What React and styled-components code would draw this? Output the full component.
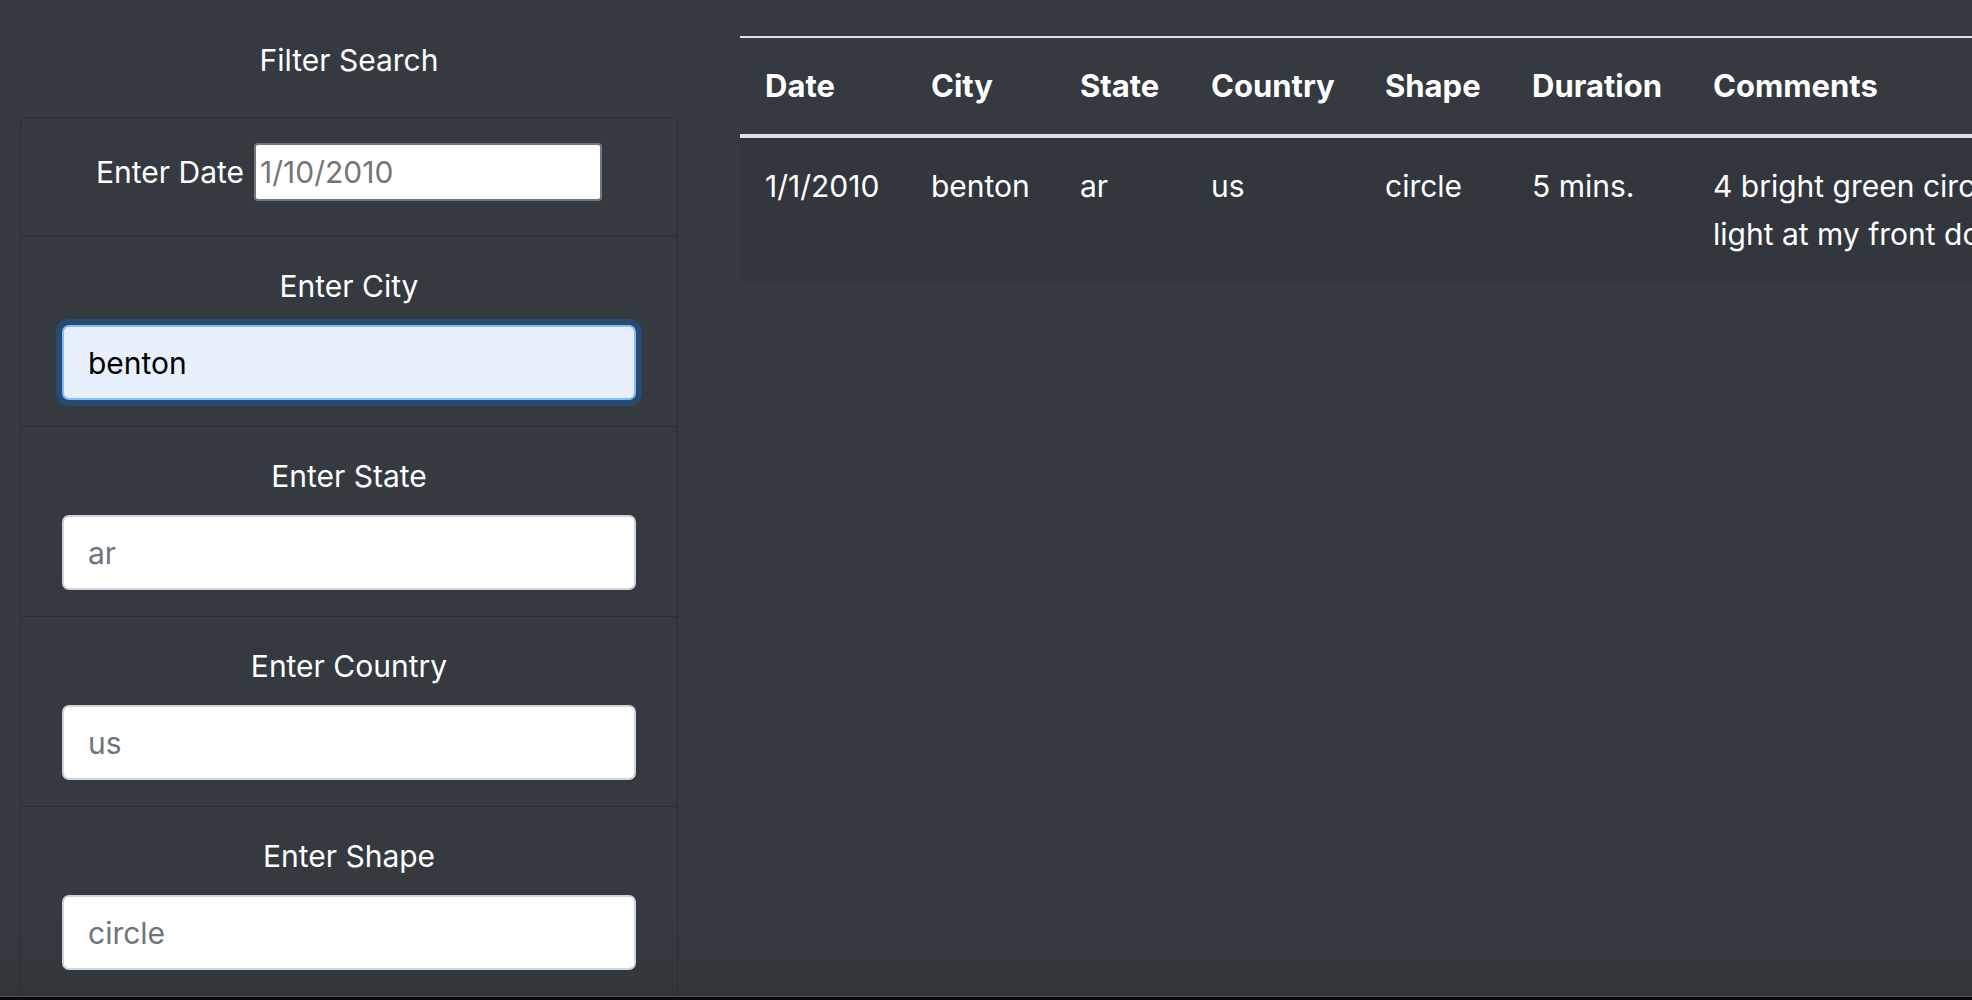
import React from "react";
import styled, { createGlobalStyle } from "styled-components";

const GlobalStyle = createGlobalStyle`
  html, body {
    margin: 0;
    padding: 0;
    background: #343a40;
    overflow: hidden;
  }
  body {
    font-family: Inter, "Noto Sans", sans-serif;
    color: #fff;
  }
  * {
    box-sizing: border-box;
  }
`;

// one row of the ufo sightings data
const sightings = [
  {
    datetime: "1/1/2010",
    city: "benton",
    state: "ar",
    country: "us",
    shape: "circle",
    durationMinutes: "5 mins.",
    comments:
      "4 bright green circles high in the sky going in circles then one bright green light at my front door.",
  },
];

const columns = [
  { key: "datetime", title: "Date", width: 166 },
  { key: "city", title: "City", width: 149 },
  { key: "state", title: "State", width: 131 },
  { key: "country", title: "Country", width: 174 },
  { key: "shape", title: "Shape", width: 147 },
  { key: "durationMinutes", title: "Duration", width: 181 },
  { key: "comments", title: "Comments", width: 1150 },
];

const filters = [
  { id: "city", label: "Enter City", value: "benton", focused: true },
  { id: "state", label: "Enter State", placeholder: "ar" },
  { id: "country", label: "Enter Country", placeholder: "us" },
  { id: "shape", label: "Enter Shape", placeholder: "circle" },
];

const App = () => {
  return (
    <Page>
      <GlobalStyle />
      <Main>
        <Sidebar>
          <Heading>Filter Search</Heading>
          <FilterList>
            <DateItem>
              <DateLabel htmlFor="datetime">Enter Date</DateLabel>
              <DateInput id="datetime" type="text" placeholder="1/10/2010" />
            </DateItem>
            {filters.map((f) => (
              <FilterItem key={f.id}>
                <FilterLabel htmlFor={f.id}>{f.label}</FilterLabel>
                <FilterInput
                  id={f.id}
                  type="text"
                  $focused={f.focused}
                  defaultValue={f.value}
                  placeholder={f.placeholder}
                />
              </FilterItem>
            ))}
          </FilterList>
        </Sidebar>

        <TableWrap>
          <Table $width={columns.reduce((sum, c) => sum + c.width, 0)}>
            <thead>
              <tr>
                {columns.map((c) => (
                  <Th key={c.key} $width={c.width}>
                    {c.title}
                  </Th>
                ))}
              </tr>
            </thead>
            <tbody>
              {sightings.map((s, i) => (
                <tr key={i}>
                  {columns.map((c) => (
                    <Td key={c.key}>{s[c.key]}</Td>
                  ))}
                </tr>
              ))}
            </tbody>
          </Table>
        </TableWrap>
      </Main>
      <WindowEdge />
    </Page>
  );
};

const Page = styled.div`
  display: flex;
  flex-direction: column;
  width: 1972px;
  height: 1000px;
  overflow: hidden;
`;

const Main = styled.div`
  flex: 1;
  display: flex;
  flex-direction: row;
  align-items: flex-start;
  gap: 62px;
  padding-left: 20px;
  overflow: hidden;
  background: linear-gradient(to bottom, #343a40 0%, #343a40 92%, #31363a 100%);
`;

const Sidebar = styled.div`
  flex: none;
  width: 658px;
`;

const Heading = styled.h5`
  margin: 38px 0 34px;
  font-size: 30px;
  line-height: 45px;
  font-weight: 400;
  text-align: center;
`;

const FilterList = styled.ul`
  margin: 0;
  padding: 0;
  list-style: none;
  border: 1px solid #2c3035;
  border-radius: 7px;
  overflow: hidden;
`;

const DateItem = styled.li`
  display: flex;
  align-items: center;
  justify-content: center;
  gap: 10px;
  padding: 25px 0 35px;
`;

const DateLabel = styled.label`
  font-size: 30px;
  line-height: 45px;
`;

const DateInput = styled.input`
  width: 348px;
  height: 58px;
  padding: 0 4px;
  border: 2px solid #767676;
  border-radius: 4px;
  background: #fff;
  font-family: Inter, "Noto Sans", sans-serif;
  font-size: 30px;
  color: #222;
  outline: none;
  &::placeholder {
    color: #757575;
  }
`;

const FilterItem = styled.li`
  display: flex;
  flex-direction: column;
  align-items: center;
  padding: 27px 41px 26px;
  border-top: 1px solid #2c3035;
`;

const FilterLabel = styled.label`
  font-size: 30px;
  line-height: 45px;
  margin-bottom: 16px;
`;

const FilterInput = styled.input`
  width: 100%;
  height: 75px;
  padding: 0 24px;
  border: 2px solid ${(p) => (p.$focused ? "#80bdff" : "#ced4da")};
  border-radius: 7px;
  background: ${(p) => (p.$focused ? "#e8f0fe" : "#fff")};
  box-shadow: ${(p) =>
    p.$focused ? "0 0 0 6px rgba(0, 123, 255, 0.25)" : "none"};
  font-family: Inter, "Noto Sans", sans-serif;
  font-size: 30px;
  color: #000;
  outline: none;
  &::placeholder {
    color: #6c757d;
  }
`;

const TableWrap = styled.div`
  flex: none;
  margin-top: 36px;
`;

const Table = styled.table`
  width: ${(p) => p.$width}px;
  table-layout: fixed;
  border-collapse: separate;
  border-spacing: 0;
  color: #fff;
`;

const Th = styled.th`
  width: ${(p) => p.$width}px;
  padding: 24px 25px;
  border-top: 2px solid #dee2e6;
  border-bottom: 4px solid #dee2e6;
  text-align: left;
  vertical-align: bottom;
  font-size: 31px;
  line-height: 48px;
  font-weight: 700;
`;

const Td = styled.td`
  padding: 24px 25px;
  vertical-align: top;
  background: rgba(0, 0, 0, 0.05);
  font-size: 30px;
  line-height: 48px;
`;

const WindowEdge = styled.div`
  flex: none;
  height: 4px;
  border-top: 1px solid #53575c;
  background: #0a0a0c;
`;

export default App;
